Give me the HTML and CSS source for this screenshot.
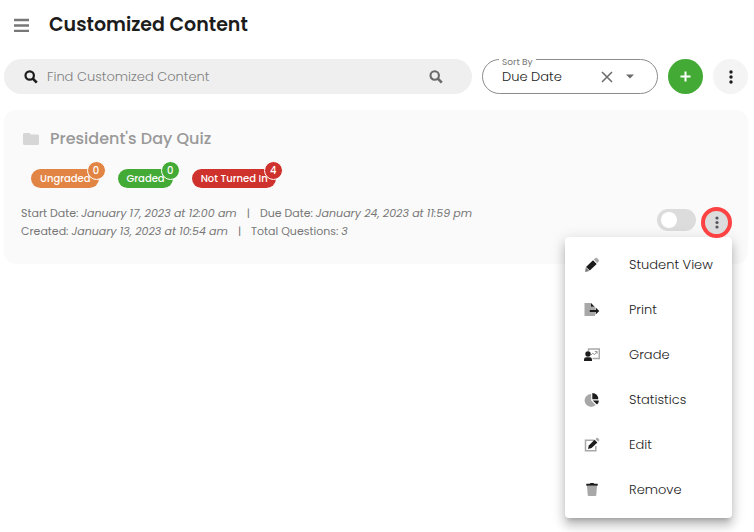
FILE: index.html
```html
<!DOCTYPE html>
<html lang="en">
<head>
  <meta charset="UTF-8">
  <meta name="viewport" content="width=device-width, initial-scale=1.0">
  <title>Customized Content</title>
  <link rel="stylesheet" href="styles.css">
</head>
<body>

  <header class="page-header">
    <button type="button" class="icon-button menu-toggle" aria-label="Open navigation">
      <svg width="15" height="14" viewBox="0 0 15 14"><path d="M0 2h15M0 7.5h15M0 13h15" stroke="#777" stroke-width="2.6"/></svg>
    </button>
    <h1>Customized Content</h1>
  </header>

  <main>
    <div class="toolbar">
      <form class="search" role="search">
        <svg width="14" height="14" viewBox="0 0 14 14" fill="none" stroke="#1c1c1c"><circle cx="5.7" cy="5.5" r="4.2" stroke-width="2.2"/><path d="M8.8 8.6l4 4" stroke-width="2.6"/></svg>
        <input type="text" class="search-input" placeholder="Find Customized Content" aria-label="Find Customized Content">
        <button type="submit" class="icon-button" aria-label="Search">
          <svg width="14" height="14" viewBox="0 0 14 14" fill="none" stroke="#6a6a6a"><circle cx="5.7" cy="5.5" r="4.2" stroke-width="2.1"/><path d="M8.8 8.6l4 4" stroke-width="2.6"/></svg>
        </button>
      </form>

      <div class="sort">
        <label for="sort">Sort By</label>
        <select id="sort" class="sort-select">
          <option>Due Date</option>
          <option>Start Date</option>
          <option>Created</option>
        </select>
        <button type="button" class="icon-button" aria-label="Clear sort">
          <svg width="12" height="12" viewBox="0 0 12 12"><path d="M1 1l10 10M11 1L1 11" stroke="#6a6a6a" stroke-width="1.5"/></svg>
        </button>
        <svg class="sort-arrow" width="10" height="5" viewBox="0 0 10 5"><path d="M1 .5h8L5 4.5z" fill="#6a6a6a"/></svg>
      </div>

      <button type="button" class="round-button add-button" aria-label="Add content">
        <svg width="11" height="11" viewBox="0 0 11 11"><path d="M5.5 .5v10M.5 5.5h10" stroke="#fff" stroke-width="2"/></svg>
      </button>
      <button type="button" class="round-button options-button" aria-label="More options">
        <svg width="4" height="14" viewBox="0 0 4 14" fill="#1c1c1c"><circle cx="2" cy="2" r="1.7"/><circle cx="2" cy="7" r="1.7"/><circle cx="2" cy="12" r="1.7"/></svg>
      </button>
    </div>

    <article class="card">
      <div class="card-title">
        <svg width="16" height="12" viewBox="0 0 16 12"><path d="M1.5 0h5L8 1.6h6.5A1.5 1.5 0 0 1 16 3.1v7.4a1.5 1.5 0 0 1-1.5 1.5h-13A1.5 1.5 0 0 1 0 10.5v-9A1.5 1.5 0 0 1 1.5 0z" fill="#d6d6d6"/></svg>
        <h2>President's Day Quiz</h2>
      </div>

      <div class="chips">
        <span class="chip ungraded">Ungraded<span class="count">0</span></span>
        <span class="chip graded">Graded<span class="count">0</span></span>
        <span class="chip missing">Not Turned In<span class="count">4</span></span>
      </div>

      <div class="card-footer">
        <div class="details">
          <p>Start Date: <em>January 17, 2023 at 12:00 am</em><span class="divider">|</span>Due Date: <em>January 24, 2023 at 11:59 pm</em></p>
          <p>Created: <em>January 13, 2023 at 10:54 am</em><span class="divider">|</span>Total Questions: <em>3</em></p>
        </div>

        <div class="actions">
          <input type="checkbox" class="switch" role="switch" aria-label="Active">
          <button type="button" class="more-button" aria-label="Quiz options" aria-expanded="true">
            <svg width="4" height="13" viewBox="0 0 4 13" fill="#55555f"><circle cx="2" cy="2" r="1.6"/><circle cx="2" cy="6.5" r="1.6"/><circle cx="2" cy="11" r="1.6"/></svg>
          </button>

          <div class="menu" role="menu">
            <button type="button" class="menu-item" role="menuitem">
              <svg width="16" height="16" viewBox="0 0 16 16"><path d="M9 3.2l3.7 3.7-6.9 6.7-3.8-3.7z" fill="#1c1c1c"/><path d="M9.8 2.5l1.5-1.4q.9-.7 1.7 0l1.6 1.6q.8.9 0 1.8l-1.4 1.4z" fill="#a8a8a8"/><path d="M1.7 10.5l3.6 3.5-4.2.9z" fill="#777"/></svg>
              Student View
            </button>
            <button type="button" class="menu-item" role="menuitem">
              <svg width="16" height="16" viewBox="0 0 16 16"><path d="M.5 1H7v4h4v9H.5z" fill="#a8a8a8"/><path d="M7 1l3.7 3.7H7z" fill="#1c1c1c"/><path d="M5.8 8h5.9V5.6L15.3 9l-3.6 3.4V10H5.8z" fill="#1c1c1c"/></svg>
              Print
            </button>
            <button type="button" class="menu-item" role="menuitem">
              <svg width="16" height="16" viewBox="0 0 16 16"><path d="M4.5 4V2h10.8v9.5H8.5" fill="none" stroke="#a8a8a8" stroke-width="1.4"/><path d="M7 8l1.8-1.8 1.6 1.5 2.5-2.9M10.800 4.500h2.300v2.200" fill="none" stroke="#999"/><circle cx="4" cy="7" r="2.7" fill="#1c1c1c"/><path d="M0 14v-1.500q0-2.300 2.200-2.300h3.600q2.200 0 2.200 2.300V14z" fill="#1c1c1c"/></svg>
              Grade
            </button>
            <button type="button" class="menu-item" role="menuitem">
              <svg width="16" height="16" viewBox="0 0 16 16"><path d="M7.2 2v6.4l4.4 4.5A6.400 6.400 0 1 1 7.200 2z" fill="#a8a8a8"/><path d="M8.3 1a6 6 0 0 1 6 6.300h-6z" fill="#1c1c1c"/><path d="M8.7 8.500h6.200a6 6 0 0 1-1.900 4.100z" fill="#1c1c1c"/></svg>
              Statistics
            </button>
            <button type="button" class="menu-item" role="menuitem">
              <svg width="16" height="16" viewBox="0 0 16 16"><path d="M10 3.2H1.5v10.600h10.300V9" fill="none" stroke="#a8a8a8" stroke-width="1.5"/><path d="M10.6 2.700l2.800 2.800-5.800 5.600-3.600.8.800-3.500z" fill="#1c1c1c"/><path d="M11.4 2l1.100-.9q.8-.5 1.400 0l1.100 1.100q.6.7 0 1.500l-1 .9z" fill="#a8a8a8"/></svg>
              Edit
            </button>
            <button type="button" class="menu-item" role="menuitem">
              <svg width="16" height="16" viewBox="0 0 16 16"><path d="M3 4h10l-.7 9q-.1 1-1.100 1H4.800q-1 0-1.100-1z" fill="#a8a8a8"/><path d="M2.3 1.800h3.500l.6-.8h3.200l.6.8h3.500v1.900H2.300z" fill="#1c1c1c"/></svg>
              Remove
            </button>
          </div>
        </div>
      </div>
    </article>
  </main>

</body>
</html>
```
FILE: styles.css
```css
* {
  margin: 0;
  padding: 0;
  box-sizing: border-box;
}

body {
  font-family: Poppins, Inter, sans-serif;
  font-weight: 300;
  background: #fff;
  color: #1c1c1c;
  min-height: 100vh;
  padding: 0 6px 0 4px;
}

svg {
  display: block;
  flex-shrink: 0;
}

button {
  font: inherit;
  color: inherit;
  border: none;
  background: none;
  cursor: pointer;
}

.icon-button {
  padding: 4px;
}

.page-header {
  display: flex;
  align-items: center;
  gap: 16px;
  height: 50px;
  padding-left: 6px;
}

.page-header h1 {
  font-size: 19px;
  font-weight: 600;
  line-height: 28px;
}

.toolbar {
  display: flex;
  gap: 10px;
  margin-top: 9px;
}

.search {
  flex: 1;
  min-width: 0;
  display: flex;
  align-items: center;
  gap: 9px;
  height: 35px;
  padding: 0 25px 0 20px;
  border-radius: 18px;
  background: #efefef;
}

.search-input {
  flex: 1;
  min-width: 0;
  border: none;
  outline: none;
  background: none;
  font: inherit;
  font-size: 13px;
}

.search-input::placeholder {
  color: #808080;
}

.sort {
  position: relative;
  display: flex;
  align-items: center;
  width: 176px;
  height: 35px;
  padding: 0 22px 0 19px;
  border: 1px solid #8c8c8c;
  border-radius: 18px;
}

.sort label {
  position: absolute;
  top: -4px;
  left: 16px;
  padding: 0 3px;
  background: #fff;
  color: #777;
  font-size: 9px;
  font-weight: 400;
  line-height: 12px;
}

.sort-select {
  flex: 1;
  min-width: 0;
  appearance: none;
  border: none;
  outline: none;
  background: none;
  color: inherit;
  font: inherit;
  font-size: 13px;
}

.sort-arrow {
  margin-left: 8px;
}

.round-button {
  display: flex;
  align-items: center;
  justify-content: center;
  width: 35px;
  height: 35px;
  border-radius: 50%;
}

.add-button {
  background: #43aa35;
}

.options-button {
  background: #f4f4f4;
}

.card {
  margin-top: 16px;
  padding: 16px 16px 24px 17px;
  border-radius: 12px;
  background: #fafafa;
}

.card-title {
  display: flex;
  align-items: center;
  gap: 11px;
  padding-left: 2px;
  color: #999;
}

.card-title h2 {
  font-size: 16px;
  font-weight: 500;
  line-height: 26px;
}

.chips {
  display: flex;
  gap: 19px;
  margin-top: 17px;
  padding-left: 10px;
}

.chip {
  position: relative;
  padding: 0 8px 0 9px;
  border-radius: 10px;
  color: #fff;
  font-size: 10px;
  font-weight: 500;
  line-height: 19px;
}

.count {
  position: absolute;
  top: -8px;
  right: -7px;
  width: 19px;
  height: 19px;
  border: 1px solid #fff;
  border-radius: 50%;
  background: inherit;
  line-height: 17px;
  text-align: center;
}

.ungraded {
  background: #e28443;
}

.graded {
  background: #43aa35;
}

.missing {
  background: #cf322c;
}

.card-footer {
  display: flex;
  justify-content: space-between;
  align-items: center;
  margin-top: 16px;
}

.details {
  color: #777;
  font-size: 11px;
  font-weight: 400;
  line-height: 18px;
}

.divider {
  margin: 0 10px;
}

.actions {
  position: relative;
  display: flex;
  align-items: center;
  gap: 5px;
}

.switch {
  appearance: none;
  display: flex;
  align-items: center;
  width: 39px;
  height: 22px;
  margin-bottom: 4px;
  padding: 0 4px;
  border-radius: 11px;
  background: #dcdcdc;
  cursor: pointer;
}

.switch::before {
  content: '';
  width: 16px;
  height: 16px;
  border-radius: 50%;
  background: #fff;
}

.switch:checked {
  justify-content: flex-end;
  background: #43aa35;
}

.more-button {
  position: relative;
  z-index: 2;
  display: flex;
  align-items: center;
  justify-content: center;
  width: 31px;
  height: 31px;
  border: 4px solid #fc4242;
  border-radius: 50%;
  background: #dcdcdc;
}

.menu {
  position: absolute;
  z-index: 1;
  top: 30px;
  right: 0;
  width: 167px;
  padding: 6px 0 5px;
  border-radius: 4px;
  background: #fff;
  box-shadow: 0 5px 5px -3px rgba(0, 0, 0, 0.2),
              0 8px 10px 1px rgba(0, 0, 0, 0.14),
              0 3px 14px 2px rgba(0, 0, 0, 0.12);
}

.menu-item {
  display: flex;
  align-items: center;
  gap: 29px;
  width: 100%;
  height: 45px;
  padding: 0 19px;
  font-size: 13px;
  text-align: left;
  white-space: nowrap;
}

.menu-item:hover {
  background: #f4f4f4;
}
```
